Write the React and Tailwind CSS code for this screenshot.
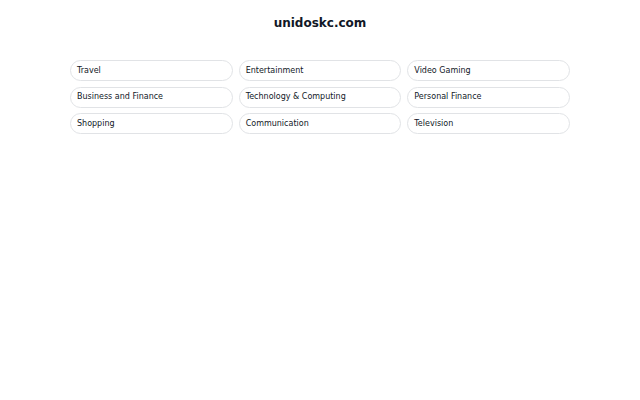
export default function App() {
  const items = [
    "Travel",
    "Entertainment",
    "Video Gaming",
    "Business and Finance",
    "Technology & Computing",
    "Personal Finance",
    "Shopping",
    "Communication",
    "Television",
  ];
  return (
    <div className="w-[640px] h-[400px] bg-white" style={{ fontFamily: '"DejaVu Sans", sans-serif' }}>
      <div className="pt-[14px] text-center text-[12px] leading-[18px] font-bold text-[#111827]">
        unidoskc.com
      </div>
      <div className="mx-auto mt-[28px] w-[500px] grid grid-cols-3 gap-x-[6px] gap-y-[5.5px]">
        {items.map((t) => (
          <div
            key={t}
            className="h-[21px] rounded-full border border-[#e1e3e6] pl-[6px] flex items-center text-[8px] text-[#111827]"
          >
            {t}
          </div>
        ))}
      </div>
    </div>
  );
}
